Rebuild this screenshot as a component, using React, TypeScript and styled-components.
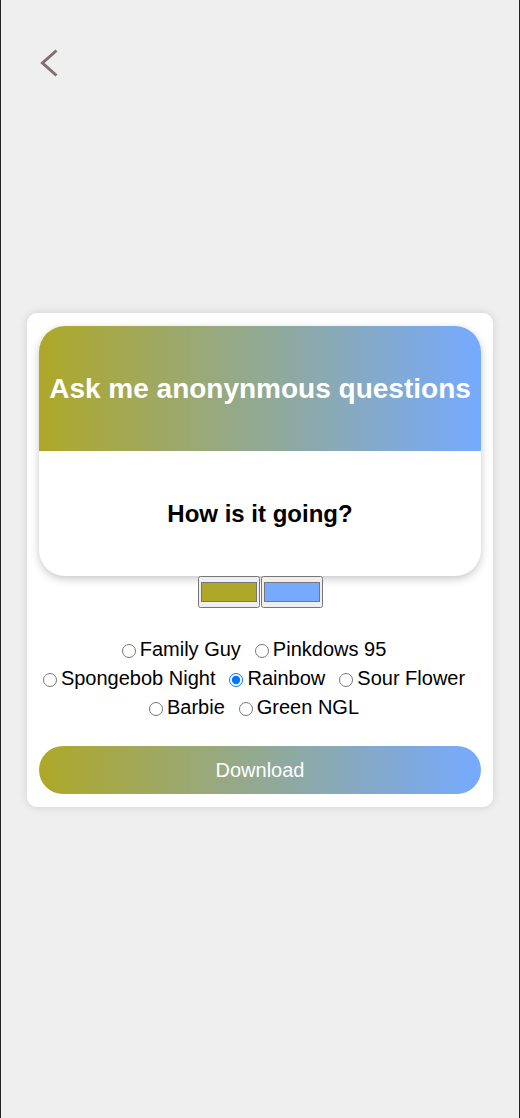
import React, { useState } from "react";
import styled, { createGlobalStyle } from "styled-components";

const Global = createGlobalStyle`
  html, body { margin: 0; padding: 0; background: #efefef; }
  body { font-family: "Liberation Sans", Arial, sans-serif; }
`;

const Frame = styled.div`
  box-sizing: border-box;
  width: 520px;
  min-height: 1118px;
  border-left: 1px solid #222;
  border-right: 1px solid #222;
  background: #efefef;
  display: flex;
  flex-direction: column;
  padding-bottom: 98px;
`;

const TopBar = styled.div`
  height: 100px;
  box-sizing: border-box;
  padding: 46px 0 0 36px;
`;

const BackButton = styled.button`
  border: none;
  background: none;
  padding: 0;
  width: 24px;
  height: 34px;
  cursor: pointer;
  display: block;
`;

const Main = styled.main`
  flex: 1;
  display: flex;
  align-items: center;
  justify-content: center;
`;

const Card = styled.section`
  width: 466px;
  box-sizing: border-box;
  background: #fff;
  border-radius: 10px;
  padding: 13px 12px 13px;
  box-shadow: 0 0 10px rgba(0, 0, 0, 0.13);
  display: flex;
  flex-direction: column;
  align-items: stretch;
`;

const Preview = styled.div`
  border-radius: 26px;
  overflow: hidden;
  background: #fff;
  box-shadow: 0 3px 8px rgba(0, 0, 0, 0.22);
`;

const PreviewHeader = styled.div<{ $from: string; $to: string }>`
  height: 125px;
  display: flex;
  align-items: center;
  justify-content: center;
  background: linear-gradient(90deg, ${(p) => p.$from}, ${(p) => p.$to});
  color: #fff;
  font-weight: bold;
  font-size: 28px;
  text-align: center;
  white-space: nowrap;
`;

const PreviewBody = styled.div`
  height: 125px;
  display: flex;
  align-items: center;
  justify-content: center;
  color: #000;
  font-weight: bold;
  font-size: 24px;
`;

const Swatches = styled.div`
  display: flex;
  justify-content: center;
  gap: 1px;
`;

const ColorInput = styled.input`
  width: 62px;
  height: 32px;
  margin: 0;
  &::-webkit-color-swatch-wrapper {
    padding: 4px 0;
  }
`;

const Options = styled.div`
  margin-top: 27px;
  margin-right: 17px;
  display: flex;
  flex-direction: column;
  align-items: center;
`;

const OptionRow = styled.div`
  display: flex;
  flex-shrink: 0;
  justify-content: center;
  gap: 9px;
  line-height: 29px;
  font-size: 20px;
  color: #000;
  white-space: nowrap;
`;

const Option = styled.label`
  display: inline-flex;
  flex-shrink: 0;
  align-items: center;
  cursor: pointer;
`;

const Radio = styled.input`
  width: 14px;
  height: 14px;
  margin: 2px 4px 0 5px;
`;

const DownloadButton = styled.button<{ $from: string; $to: string }>`
  margin-top: 24px;
  height: 48px;
  border: none;
  border-radius: 24px;
  background: linear-gradient(90deg, ${(p) => p.$from}, ${(p) => p.$to});
  color: #fff;
  font-family: "Liberation Sans", Arial, sans-serif;
  font-size: 20px;
  cursor: pointer;
`;

const rows = [
  ["Family Guy", "Pinkdows 95"],
  ["Spongebob Night", "Rainbow", "Sour Flower"],
  ["Barbie", "Green NGL"],
];

export default function App() {
  const [theme, setTheme] = useState("Rainbow");
  const [from, setFrom] = useState("#aea828");
  const [to, setTo] = useState("#76aaff");
  return (
    <Frame>
      <Global />
      <TopBar>
        <BackButton aria-label="Back">
          <svg width="24" height="34" viewBox="0 0 24 34">
            <polyline
              points="19.5,4.5 5.5,17 19.5,29.5"
              fill="none"
              stroke="#7b726f"
              strokeWidth="3"
            />
          </svg>
        </BackButton>
      </TopBar>
      <Main>
        <Card>
          <Preview>
            <PreviewHeader $from={from} $to={to}>
              Ask me anonynmous questions
            </PreviewHeader>
            <PreviewBody>How is it going?</PreviewBody>
          </Preview>
          <Swatches>
            <ColorInput type="color" value={from} onChange={(e) => setFrom(e.target.value)} />
            <ColorInput type="color" value={to} onChange={(e) => setTo(e.target.value)} />
          </Swatches>
          <Options>
            {rows.map((row, i) => (
              <OptionRow key={i}>
                {row.map((name) => (
                  <Option key={name}>
                    <Radio
                      type="radio"
                      name="theme"
                      checked={theme === name}
                      onChange={() => setTheme(name)}
                    />
                    {name}
                  </Option>
                ))}
              </OptionRow>
            ))}
          </Options>
          <DownloadButton $from={from} $to={to}>Download</DownloadButton>
        </Card>
      </Main>
    </Frame>
  );
}
